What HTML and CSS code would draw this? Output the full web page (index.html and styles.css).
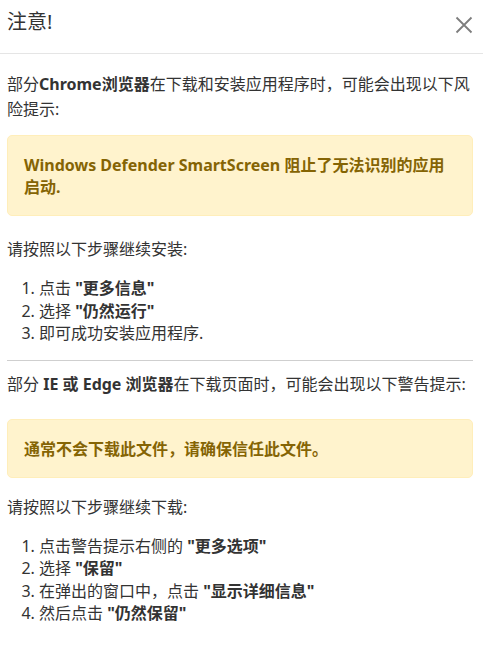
FILE: index.html
```html
<!DOCTYPE html>
<html lang="zh-CN">
<head>
<meta charset="utf-8">
<title>注意!</title>
<link rel="stylesheet" href="styles.css">
</head>
<body>
<div class="modal">
  <div class="modal-header">
    <h5 class="modal-title">注意!</h5>
    <button class="close" type="button" aria-label="关闭">
      <svg width="18" height="18" viewBox="0 0 18 18"><path d="M1.5 1.5 L16.5 16.5 M16.5 1.5 L1.5 16.5" stroke="#7d7d7d" stroke-width="1.8" fill="none"/></svg>
    </button>
  </div>
  <div class="modal-body">
    <p class="text first">部分<b>Chrome浏览器</b>在下载和安装应用程序时，可能会出现以下风险提示:</p>
    <div class="alert alert-one">Windows Defender SmartScreen 阻止了无法识别的应用启动.</div>
    <p class="text after-alert-one">请按照以下步骤继续安装:</p>
    <ol class="steps steps-one">
      <li>点击 <b>"更多信息"</b></li>
      <li>选择 <b>"仍然运行"</b></li>
      <li>即可成功安装应用程序.</li>
    </ol>
    <hr class="divider">
    <p class="text after-hr">部分 <b>IE 或 Edge 浏览器</b>在下载页面时，可能会出现以下警告提示:</p>
    <div class="alert alert-two">通常不会下载此文件，请确保信任此文件。</div>
    <p class="text after-alert-two">请按照以下步骤继续下载:</p>
    <ol class="steps steps-two">
      <li>点击警告提示右侧的 <b>"更多选项"</b></li>
      <li>选择 <b>"保留"</b></li>
      <li>在弹出的窗口中，点击 <b>"显示详细信息"</b></li>
      <li>然后点击 <b>"仍然保留"</b></li>
    </ol>
  </div>
</div>
</body>
</html>
```

FILE: styles.css
```css
html, body {
  margin: 0;
  padding: 0;
  background: #ffffff;
}

body {
  font-family: "Noto Sans", "Noto Sans CJK SC", sans-serif;
  font-size: 16px;
  color: #333333;
}

.modal {
  width: 483px;
}

.modal-header {
  height: 54px;
  box-sizing: border-box;
  padding: 8px 10px 0 7px;
  display: flex;
  justify-content: space-between;
  align-items: flex-start;
  border-bottom: 1px solid #e5e5e5;
}

.modal-title {
  margin: 0;
  font-size: 20px;
  font-weight: 400;
  line-height: 28px;
  color: #333333;
}

.close {
  border: 0;
  background: transparent;
  padding: 0;
  margin-top: 8px;
  width: 18px;
  height: 18px;
  display: flex;
  cursor: pointer;
}

.modal-body {
  padding: 0 10px 0 7px;
}

.text {
  margin: 0;
  line-height: 25px;
}

.text b, .steps b {
  font-weight: 700;
}

.first {
  margin-top: 18px;
}

.alert {
  background: #fff3cd;
  border: 1px solid #ffeeba;
  border-radius: 5px;
  color: #856404;
  font-weight: 700;
  line-height: 22px;
  padding: 18px 16px 17px;
}

.alert-one {
  margin-top: 13px;
}

.after-alert-one {
  margin-top: 21px;
}

.steps {
  margin: 15px 0 0;
  padding-left: 32px;
  line-height: 22.5px;
}

.divider {
  margin: 15px 0 0;
  border: 0;
  border-top: 1px solid #cfcfcf;
  height: 0;
}

.after-hr {
  margin-top: 11px;
}

.alert-two {
  margin-top: 22px;
}

.after-alert-two {
  margin-top: 17px;
}
```
